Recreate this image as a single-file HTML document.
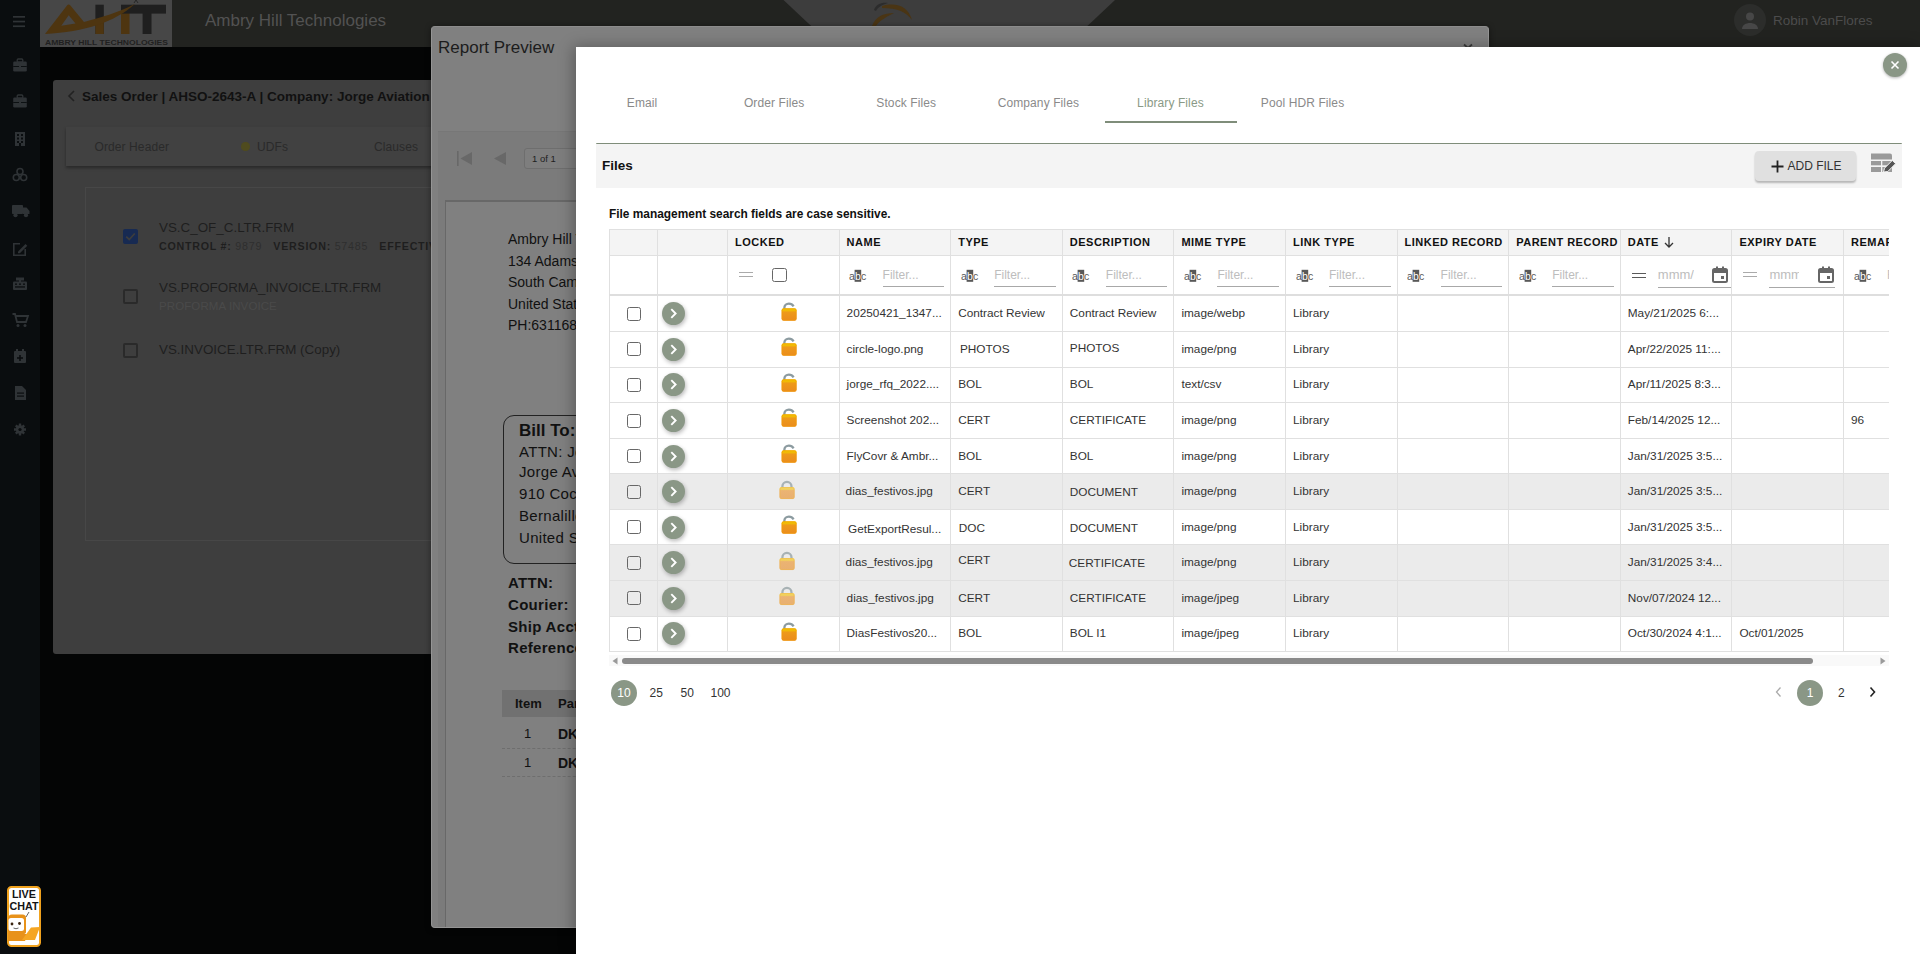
<!DOCTYPE html><html><head><meta charset="utf-8"><style>
*{box-sizing:border-box;margin:0;padding:0}
html,body{width:1920px;height:954px;overflow:hidden;background:#040505;font-family:"Liberation Sans",sans-serif}
.a{position:absolute}
.t{position:absolute;white-space:nowrap;line-height:1}
.vl{position:absolute;width:1px;background:#e0e0e0}
.hl{position:absolute;height:1px;background:#e0e0e0}
.cb{position:absolute;width:14.5px;height:14.2px;border:1.7px solid #676767;border-radius:2.5px}
.ex{position:absolute;width:23px;height:23px;border-radius:50%;background:#8a9786;box-shadow:1px 2px 4px rgba(0,0,0,.28)}
.dt{position:absolute;white-space:nowrap;font-size:11.8px;color:#333;line-height:1}
.hd{position:absolute;white-space:nowrap;font-size:11px;font-weight:bold;letter-spacing:.5px;color:#111;line-height:1}
.ph{position:absolute;white-space:nowrap;font-size:12px;color:#bdbdbd;line-height:1}
.ul{position:absolute;height:1px;background:#a8a8a8}
</style></head><body>
<div class="a" style="left:0;top:0;width:40px;height:954px;background:#0a0d0f"></div>
<svg class="a" style="left:0;top:0" width="40" height="440" viewBox="0 0 40 440"><g fill="#2f3336"><rect x="13" y="16" width="12" height="1.7"/><rect x="13" y="20.7" width="12" height="1.7"/><rect x="13" y="25.4" width="12" height="1.7"/><rect x="13.2" y="61.5" width="13.6" height="10" rx="1.2"/><rect x="17.2" y="59" width="5.6" height="3.2" rx="1" fill="none" stroke="#2f3336" stroke-width="1.3"/><rect x="13.2" y="66" width="13.6" height="0.9" fill="#0a0d0f"/><rect x="19" y="65.3" width="2" height="2.2"/><rect x="13.2" y="97.5" width="13.6" height="10" rx="1.2"/><rect x="17.2" y="95" width="5.6" height="3.2" rx="1" fill="none" stroke="#2f3336" stroke-width="1.3"/><rect x="13.2" y="102" width="13.6" height="0.9" fill="#0a0d0f"/><rect x="19" y="101.3" width="2" height="2.2"/><rect x="15" y="132" width="10" height="14"/><g fill="#0a0d0f"><rect x="17" y="134" width="2" height="2"/><rect x="21" y="134" width="2" height="2"/><rect x="17" y="137.5" width="2" height="2"/><rect x="21" y="137.5" width="2" height="2"/><rect x="17" y="141" width="2" height="2"/><rect x="21" y="141" width="2" height="2"/><rect x="19" y="143" width="2" height="3"/></g><g fill="none" stroke="#2f3336" stroke-width="1.6"><circle cx="20" cy="171.5" r="3"/><circle cx="16.3" cy="177.5" r="3"/><circle cx="23.7" cy="177.5" r="3"/></g><rect x="12" y="205" width="11" height="9" rx="0.8"/><path d="M23 207.5h3.5l3 3.5v3h-6.5z"/><circle cx="15.5" cy="215.2" r="2.1"/><circle cx="26" cy="215.2" r="2.1"/><path d="M13 243h7v1.6h-5.4v9.8h9.8v-5.4h1.6v7h-13z"/><path d="M18 251.5l7.5-7.5 1.8 1.8-7.5 7.5h-1.8z"/><rect x="13" y="281.5" width="14" height="8.5" rx="1"/><rect x="16" y="277.5" width="8" height="3"/><rect x="19" y="280" width="2" height="2"/><g fill="#0a0d0f"><rect x="15" y="283.5" width="2" height="1.3"/><rect x="19" y="283.5" width="2" height="1.3"/><rect x="23" y="283.5" width="2" height="1.3"/><rect x="15" y="286.3" width="10" height="1.3"/></g><path d="M12.5 314h2.5l2 8h9l2-6h-12" fill="none" stroke="#2f3336" stroke-width="1.8"/><circle cx="18" cy="325.5" r="1.5"/><circle cx="25" cy="325.5" r="1.5"/><rect x="14" y="351" width="12" height="12" rx="1"/><rect x="16" y="349" width="2" height="3"/><rect x="22" y="349" width="2" height="3"/><g fill="#0a0d0f"><rect x="19.2" y="355" width="1.6" height="6"/><rect x="17" y="357.2" width="6" height="1.6"/></g><path d="M15 386h7l4 4v10h-11z"/><g fill="#0a0d0f"><rect x="17" y="392.5" width="7" height="1.2"/><rect x="17" y="395.5" width="7" height="1.2"/></g><circle cx="20" cy="429.5" r="4.2"/><g stroke="#2f3336" stroke-width="2.4"><path d="M20 423.5v12M14 429.5h12M15.8 425.3l8.4 8.4M24.2 425.3l-8.4 8.4"/></g><circle cx="20" cy="429.5" r="1.6" fill="#0a0d0f"/></g></svg>
<div class="a" style="left:40px;top:0;width:1880px;height:47px;background:#222320"></div>
<svg class="a" style="left:770px;top:0" width="360" height="47" viewBox="0 0 360 47"><path d="M13.5 0 L 63.5 47 L 295 47 L 345 0 Z" fill="#3d3d3d"/><path d="M102 26 C 106 16, 114 13, 124 13 C 118 16, 110 20, 106 26 Z" fill="#4a3514"/><path d="M112 6 C 126 2, 138 6, 142 20 C 136 12, 128 8, 112 8 Z" fill="#4a3514"/><path d="M104 10 C 106 4, 112 2, 118 3 C 112 5, 108 7, 106 11 Z" fill="#2c2c2c"/></svg>
<div class="a" style="left:40px;top:0;width:132px;height:47px;background:#474747"></div>
<svg class="a" style="left:40px;top:0" width="132" height="47" viewBox="0 0 132 47"><rect x="55.4" y="4.7" width="8.4" height="29.3" fill="#1f1f1f"/><rect x="55.4" y="22" width="8.4" height="12" fill="#4e3510"/><rect x="81" y="12" width="8.5" height="22" fill="#4e3510"/><rect x="81" y="4.7" width="45" height="8.9" fill="#1f1f1f"/><rect x="102.6" y="13" width="8.9" height="21" fill="#1f1f1f"/><path d="M5 34 L27 5.5 Q28.7 3.6 30.4 5.5 L44 22 C60 18, 80 12, 95.2 3.8 C75 22, 45 32, 5 34 Z" fill="#4e3510"/><path d="M21.3 25.7 L28.7 15.2 L35.5 23.6 Z" fill="#474747"/><path d="M94 3 L96 0 L98 3" stroke="#1f1f1f" stroke-width="0.8" fill="none"/><text x="5" y="44.5" font-family="Liberation Sans" font-weight="bold" font-size="7.6" fill="#1f1f1f" textLength="123" lengthAdjust="spacingAndGlyphs">AMBRY HILL TECHNOLOGIES</text></svg>
<div class="t" style="left:205px;top:12px;font-size:17px;color:#525252">Ambry Hill Technologies</div>
<div class="a" style="left:1734px;top:4px;width:32px;height:32px;border-radius:50%;background:#2c2d2b"></div>
<svg class="a" style="left:1734px;top:4px" width="32" height="32"><circle cx="16" cy="12.5" r="4" fill="#474747"/><path d="M8 25c0-4 4-6 8-6s8 2 8 6z" fill="#474747"/></svg>
<div class="t" style="left:1773px;top:14px;font-size:13.5px;color:#4c4c4c">Robin VanFlores</div>
<div class="a" style="left:53px;top:80px;width:400px;height:574px;background:#3e3e3e;border-radius:3px"></div>
<svg class="a" style="left:64px;top:89px" width="14" height="14"><path d="M10 2L5 7L10 12" stroke="#222" stroke-width="1.6" fill="none"/></svg>
<div class="t" style="left:82px;top:90px;font-size:13.5px;font-weight:bold;color:#111">Sales Order | AHSO-2643-A | Company: Jorge Aviation</div>
<div class="a" style="left:66px;top:127px;width:400px;height:39px;background:#414141;box-shadow:0 2px 3px rgba(0,0,0,.35)"></div>
<div class="t" style="left:94.5px;top:141px;font-size:12px;letter-spacing:.1px;color:#2a2a2a">Order Header</div>
<div class="a" style="left:241px;top:142px;width:8.5px;height:8.5px;border-radius:50%;background:#4f4b1e"></div>
<div class="t" style="left:257px;top:141px;font-size:12px;letter-spacing:.1px;color:#2a2a2a">UDFs</div>
<div class="t" style="left:374px;top:141px;font-size:12px;letter-spacing:.1px;color:#2a2a2a">Clauses</div>
<div class="a" style="left:85px;top:187px;width:400px;height:354px;border:1px solid #474747"></div>
<div class="a" style="left:123px;top:229px;width:15px;height:15px;background:#172a52;border-radius:2px"></div>
<svg class="a" style="left:123px;top:229px" width="15" height="15"><path d="M3.2 7.6L6.2 10.5L11.8 4.5" stroke="#3d3d3d" stroke-width="1.8" fill="none"/></svg>
<div class="t" style="left:159px;top:221px;font-size:13.4px;color:#1e1e1e">VS.C_OF_C.LTR.FRM</div>
<div class="t" style="left:159px;top:241px;font-size:10.7px;font-weight:bold;letter-spacing:.75px;color:#1e1e1e">CONTROL #: <span style="font-weight:normal;color:#2e2e2e">9879</span>&nbsp;&nbsp; VERSION: <span style="font-weight:normal;color:#2e2e2e">57485</span>&nbsp;&nbsp; EFFECTIVE</div>
<div class="a" style="left:123px;top:288.5px;width:15px;height:15px;border:2px solid #2a2a2a;border-radius:2px"></div>
<div class="t" style="left:159px;top:281px;font-size:13.4px;color:#1e1e1e">VS.PROFORMA_INVOICE.LTR.FRM</div>
<div class="t" style="left:159px;top:300.5px;font-size:11.5px;letter-spacing:.1px;color:#4a4a4a">PROFORMA INVOICE</div>
<div class="a" style="left:123px;top:342.5px;width:15px;height:15px;border:2px solid #2a2a2a;border-radius:2px"></div>
<div class="t" style="left:159px;top:343px;font-size:13.4px;color:#1e1e1e">VS.INVOICE.LTR.FRM (Copy)</div>
<svg class="a" style="left:7px;top:886px" width="34" height="61" viewBox="0 0 34 61"><rect x="1" y="1" width="32" height="59" rx="3.5" fill="#fff" stroke="#f0a21e" stroke-width="2"/><text x="17" y="12" text-anchor="middle" font-family="Liberation Sans" font-weight="bold" font-size="10" fill="#151515" textLength="24" lengthAdjust="spacingAndGlyphs">LIVE</text><text x="17" y="23.5" text-anchor="middle" font-family="Liberation Sans" font-weight="bold" font-size="10" fill="#151515" textLength="29" lengthAdjust="spacingAndGlyphs">CHAT</text><path d="M1 33 Q1 28.5 5 28.5 L15.5 28.5 Q19 28.5 19 32 L19 46 Q19 48 16 48 L1 48 Z" fill="#e8921a"/><rect x="1.5" y="32" width="15.5" height="13" rx="2.5" fill="#fff"/><circle cx="5" cy="38" r="1.4" fill="#3a2410"/><circle cx="12.5" cy="37.5" r="1.4" fill="#3a2410"/><path d="M6.5 42 Q9 43.5 11.5 42" stroke="#555" stroke-width="0.9" fill="none"/><path d="M1 48 L21 48 L18 55 L1 55 Z" fill="#e8921a"/><path d="M15 54 L24 41.5 L33 41 L28 54 Z" fill="#f5a623"/><path d="M19 31 L22 26" stroke="#666" stroke-width="1"/></svg>
<div class="a" style="left:431px;top:26px;width:1058px;height:902px;background:#808080;border-radius:4px;border:1px solid #959595;border-top:1.5px solid #8c8c8c;box-shadow:0 1px 6px rgba(0,0,0,.45)"></div>
<div class="t" style="left:438px;top:39px;font-size:17px;color:#1c1c1c">Report Preview</div>
<svg class="a" style="left:1462px;top:41px" width="12" height="7"><path d="M2 3.5L6 7L10 3.5" stroke="#3a3a3a" stroke-width="1.8" fill="none"/></svg>
<div class="a" style="left:438px;top:131px;width:200px;height:796px;background:#7b7b7b;border-top:1px solid #777"></div>
<svg class="a" style="left:455px;top:149px" width="55" height="19" viewBox="0 0 55 19"><rect x="2" y="2" width="1.6" height="15" fill="#686868"/><path d="M5.5 9.5L17 3V16Z" fill="#686868"/><path d="M39 9.5L51 3V16Z" fill="#686868"/></svg>
<div class="a" style="left:523.5px;top:147.5px;width:80px;height:21px;border:1px solid #6e6e6e;border-radius:3px;background:#7e7e7e"></div>
<div class="t" style="left:532px;top:153.5px;font-size:9.5px;color:#1e1e1e">1 of 1</div>
<div class="a" style="left:444.5px;top:200px;width:200px;height:727px;background:#808080;border-left:1.5px solid #686868;border-top:2px solid #686868"></div>
<div class="t" style="left:508px;top:232.0px;font-size:14px;color:#111">Ambry Hill Technologies</div>
<div class="t" style="left:508px;top:253.6px;font-size:14px;color:#111">134 Adams Street</div>
<div class="t" style="left:508px;top:275.2px;font-size:14px;color:#111">South Cambridge</div>
<div class="t" style="left:508px;top:296.8px;font-size:14px;color:#111">United States</div>
<div class="t" style="left:508px;top:318.4px;font-size:14px;color:#111">PH:6311688</div>
<div class="a" style="left:502.5px;top:415px;width:200px;height:149px;border:1.5px solid #222;border-radius:11px"></div>
<div class="t" style="left:519px;top:422px;font-size:17px;font-weight:bold;color:#111">Bill To:</div>
<div class="t" style="left:519px;top:444px;font-size:15px;letter-spacing:.3px;color:#111">ATTN: Jorge</div>
<div class="t" style="left:519px;top:463.5px;font-size:15px;letter-spacing:.3px;color:#111">Jorge Aviation</div>
<div class="t" style="left:519px;top:485.5px;font-size:15px;letter-spacing:.3px;color:#111">910 Cocoa</div>
<div class="t" style="left:519px;top:507.5px;font-size:15px;letter-spacing:.3px;color:#111">Bernalillo</div>
<div class="t" style="left:519px;top:530px;font-size:15px;letter-spacing:.3px;color:#111">United States</div>
<div class="t" style="left:508px;top:575.0px;font-size:15px;letter-spacing:.3px;font-weight:bold;color:#111">ATTN:</div>
<div class="t" style="left:508px;top:596.8px;font-size:15px;letter-spacing:.3px;font-weight:bold;color:#111">Courier:</div>
<div class="t" style="left:508px;top:618.6px;font-size:15px;letter-spacing:.3px;font-weight:bold;color:#111">Ship Acct</div>
<div class="t" style="left:508px;top:640.4px;font-size:15px;letter-spacing:.3px;font-weight:bold;color:#111">Reference</div>
<div class="a" style="left:502px;top:690px;width:200px;height:27px;background:#717171"></div>
<div class="t" style="left:515px;top:697px;font-size:13px;font-weight:bold;color:#111">Item</div>
<div class="t" style="left:558px;top:697px;font-size:13px;font-weight:bold;color:#111">Part</div>
<div class="t" style="left:524px;top:727.0px;font-size:13px;color:#111">1</div>
<div class="t" style="left:558px;top:727.0px;font-size:14px;font-weight:bold;color:#111">DK</div>
<div class="a" style="left:502px;top:747.5px;width:200px;height:0;border-top:1px dashed #6e6e6e"></div>
<div class="t" style="left:524px;top:755.5px;font-size:13px;color:#111">1</div>
<div class="t" style="left:558px;top:755.5px;font-size:14px;font-weight:bold;color:#111">DK</div>
<div class="a" style="left:502px;top:776.0px;width:200px;height:0;border-top:1px dashed #6e6e6e"></div>
<div class="a" style="left:576px;top:47px;width:1344px;height:907px;background:#fff;box-shadow:-3px -1px 14px rgba(0,0,0,.28)"></div>
<div class="a" style="left:1883px;top:53px;width:24px;height:24px;border-radius:50%;background:#8a9786;box-shadow:0 1px 3px rgba(0,0,0,.3)"></div>
<svg class="a" style="left:1883px;top:53px" width="24" height="24"><path d="M8.5 8.5L15.5 15.5M15.5 8.5L8.5 15.5" stroke="#fff" stroke-width="1.6"/></svg>
<div class="t" style="left:576.0px;top:97px;width:132.1px;text-align:center;font-size:12px;letter-spacing:.1px;color:#8a8a8a">Email</div>
<div class="t" style="left:708.1px;top:97px;width:132.1px;text-align:center;font-size:12px;letter-spacing:.1px;color:#8a8a8a">Order Files</div>
<div class="t" style="left:840.2px;top:97px;width:132.1px;text-align:center;font-size:12px;letter-spacing:.1px;color:#8a8a8a">Stock Files</div>
<div class="t" style="left:972.3px;top:97px;width:132.1px;text-align:center;font-size:12px;letter-spacing:.1px;color:#8a8a8a">Company Files</div>
<div class="t" style="left:1104.4px;top:97px;width:132.1px;text-align:center;font-size:12px;letter-spacing:.1px;color:#8a9a86">Library Files</div>
<div class="t" style="left:1236.5px;top:97px;width:132.1px;text-align:center;font-size:12px;letter-spacing:.1px;color:#8a8a8a">Pool HDR Files</div>
<div class="a" style="left:1104.7px;top:121.4px;width:132.1px;height:1.5px;background:#7f8d7a"></div>
<div class="a" style="left:596px;top:142.7px;width:1306px;height:1.6px;background:#7f8d7a;border-radius:2px 2px 0 0"></div>
<div class="a" style="left:596px;top:144px;width:1306px;height:44px;background:#f4f4f4"></div>
<div class="t" style="left:602px;top:159px;font-size:13.5px;font-weight:bold;color:#111">Files</div>
<div class="a" style="left:1755px;top:151px;width:101px;height:30px;background:#e0e0e0;border-radius:4px;box-shadow:0 2px 2px rgba(0,0,0,.25)"></div>
<svg class="a" style="left:1771px;top:160px" width="13" height="13"><path d="M6.5 0.5V12.5M0.5 6.5H12.5" stroke="#222" stroke-width="1.8"/></svg>
<div class="t" style="left:1787.5px;top:160px;font-size:12px;color:#333">ADD FILE</div>
<svg class="a" style="left:1871px;top:153px" width="26" height="21" viewBox="0 0 26 21"><path d="M0 0.5H19Q21 0.5 21 2.5V6.5H0Z" fill="#9a9a9a"/><rect x="0" y="8" width="10" height="4.3" fill="#9a9a9a"/><rect x="11.3" y="8" width="9.7" height="4.3" fill="#9a9a9a"/><rect x="0" y="14" width="10" height="5" fill="#9a9a9a"/><rect x="11.3" y="14" width="9.7" height="5" fill="#9a9a9a"/><path d="M12.5 19L13.5 15.2L21.3 7.4L24.6 10.7L16.8 18.5Z" fill="#555" stroke="#f4f4f4" stroke-width="1"/></svg>
<div class="t" style="left:609px;top:208.5px;font-size:11.9px;font-weight:bold;color:#111">File management search fields are case sensitive.</div>
<div class="a" style="left:609px;top:229px;width:1280px;height:26px;background:#f4f4f4"></div>
<div class="a" style="left:609px;top:473.80px;width:1280px;height:35.56px;background:#ebebeb"></div>
<div class="a" style="left:609px;top:544.92px;width:1280px;height:35.56px;background:#ebebeb"></div>
<div class="a" style="left:609px;top:580.48px;width:1280px;height:35.56px;background:#ebebeb"></div>
<div class="vl" style="left:609px;top:229px;height:423px"></div>
<div class="vl" style="left:657px;top:229px;height:423px"></div>
<div class="vl" style="left:727px;top:229px;height:423px"></div>
<div class="vl" style="left:839px;top:229px;height:423px"></div>
<div class="vl" style="left:950px;top:229px;height:423px"></div>
<div class="vl" style="left:1062px;top:229px;height:423px"></div>
<div class="vl" style="left:1173px;top:229px;height:423px"></div>
<div class="vl" style="left:1285px;top:229px;height:423px"></div>
<div class="vl" style="left:1397px;top:229px;height:423px"></div>
<div class="vl" style="left:1508px;top:229px;height:423px"></div>
<div class="vl" style="left:1620px;top:229px;height:423px"></div>
<div class="vl" style="left:1731px;top:229px;height:423px"></div>
<div class="vl" style="left:1843px;top:229px;height:423px"></div>
<div class="hl" style="left:609px;top:229px;width:1280px"></div>
<div class="hl" style="left:609px;top:255px;width:1280px"></div>
<div class="a" style="left:609px;top:294px;width:1280px;height:2px;background:#dedede"></div>
<div class="hl" style="left:609px;top:331px;width:1280px"></div>
<div class="hl" style="left:609px;top:367px;width:1280px"></div>
<div class="hl" style="left:609px;top:402px;width:1280px"></div>
<div class="hl" style="left:609px;top:438px;width:1280px"></div>
<div class="hl" style="left:609px;top:473px;width:1280px"></div>
<div class="hl" style="left:609px;top:509px;width:1280px"></div>
<div class="hl" style="left:609px;top:544px;width:1280px"></div>
<div class="hl" style="left:609px;top:580px;width:1280px"></div>
<div class="hl" style="left:609px;top:616px;width:1280px"></div>
<div class="hl" style="left:609px;top:651px;width:1280px"></div>
<div class="hd" style="left:735.0px;top:237px">LOCKED</div>
<div class="hd" style="left:846.6px;top:237px">NAME</div>
<div class="hd" style="left:958.2px;top:237px">TYPE</div>
<div class="hd" style="left:1069.8px;top:237px">DESCRIPTION</div>
<div class="hd" style="left:1181.4px;top:237px">MIME TYPE</div>
<div class="hd" style="left:1293.0px;top:237px">LINK TYPE</div>
<div class="hd" style="left:1404.6px;top:237px">LINKED RECORD</div>
<div class="hd" style="left:1516.2px;top:237px">PARENT RECORD</div>
<div class="hd" style="left:1627.8px;top:237px">DATE</div>
<div class="hd" style="left:1739.4px;top:237px">EXPIRY DATE</div>
<div class="hd" style="left:1851.0px;top:237px">REMARKS</div>
<svg class="a" style="left:1663px;top:236px" width="12" height="12"><path d="M6 1V11M2 7L6 11L10 7" stroke="#333" stroke-width="1.3" fill="none"/></svg>
<div class="a" style="left:739px;top:272px;width:14px;height:1.2px;background:#aaa"></div><div class="a" style="left:739px;top:276px;width:14px;height:1.2px;background:#aaa"></div>
<div class="cb" style="left:772px;top:268px;width:15px;height:14px"></div>
<svg class="a" style="left:849px;top:268px" width="20" height="16" viewBox="0 0 20 16"><text x="0" y="12.2" font-family="Liberation Sans" font-size="10.5" fill="#585858">a</text><rect x="5.6" y="1.8" width="6.6" height="12" fill="#585858"/><text x="5.9" y="12.2" font-family="Liberation Sans" font-size="10.5" fill="#fff">b</text><text x="12" y="12.2" font-family="Liberation Sans" font-size="10.5" fill="#585858">c</text></svg>
<div class="ph" style="left:882.6px;top:269px">Filter...</div>
<div class="ul" style="left:882.6px;top:286px;width:61.6px"></div>
<svg class="a" style="left:961px;top:268px" width="20" height="16" viewBox="0 0 20 16"><text x="0" y="12.2" font-family="Liberation Sans" font-size="10.5" fill="#585858">a</text><rect x="5.6" y="1.8" width="6.6" height="12" fill="#585858"/><text x="5.9" y="12.2" font-family="Liberation Sans" font-size="10.5" fill="#fff">b</text><text x="12" y="12.2" font-family="Liberation Sans" font-size="10.5" fill="#585858">c</text></svg>
<div class="ph" style="left:994.2px;top:269px">Filter...</div>
<div class="ul" style="left:994.2px;top:286px;width:61.6px"></div>
<svg class="a" style="left:1072px;top:268px" width="20" height="16" viewBox="0 0 20 16"><text x="0" y="12.2" font-family="Liberation Sans" font-size="10.5" fill="#585858">a</text><rect x="5.6" y="1.8" width="6.6" height="12" fill="#585858"/><text x="5.9" y="12.2" font-family="Liberation Sans" font-size="10.5" fill="#fff">b</text><text x="12" y="12.2" font-family="Liberation Sans" font-size="10.5" fill="#585858">c</text></svg>
<div class="ph" style="left:1105.8px;top:269px">Filter...</div>
<div class="ul" style="left:1105.8px;top:286px;width:61.6px"></div>
<svg class="a" style="left:1184px;top:268px" width="20" height="16" viewBox="0 0 20 16"><text x="0" y="12.2" font-family="Liberation Sans" font-size="10.5" fill="#585858">a</text><rect x="5.6" y="1.8" width="6.6" height="12" fill="#585858"/><text x="5.9" y="12.2" font-family="Liberation Sans" font-size="10.5" fill="#fff">b</text><text x="12" y="12.2" font-family="Liberation Sans" font-size="10.5" fill="#585858">c</text></svg>
<div class="ph" style="left:1217.4px;top:269px">Filter...</div>
<div class="ul" style="left:1217.4px;top:286px;width:61.6px"></div>
<svg class="a" style="left:1296px;top:268px" width="20" height="16" viewBox="0 0 20 16"><text x="0" y="12.2" font-family="Liberation Sans" font-size="10.5" fill="#585858">a</text><rect x="5.6" y="1.8" width="6.6" height="12" fill="#585858"/><text x="5.9" y="12.2" font-family="Liberation Sans" font-size="10.5" fill="#fff">b</text><text x="12" y="12.2" font-family="Liberation Sans" font-size="10.5" fill="#585858">c</text></svg>
<div class="ph" style="left:1329.0px;top:269px">Filter...</div>
<div class="ul" style="left:1329.0px;top:286px;width:61.6px"></div>
<svg class="a" style="left:1407px;top:268px" width="20" height="16" viewBox="0 0 20 16"><text x="0" y="12.2" font-family="Liberation Sans" font-size="10.5" fill="#585858">a</text><rect x="5.6" y="1.8" width="6.6" height="12" fill="#585858"/><text x="5.9" y="12.2" font-family="Liberation Sans" font-size="10.5" fill="#fff">b</text><text x="12" y="12.2" font-family="Liberation Sans" font-size="10.5" fill="#585858">c</text></svg>
<div class="ph" style="left:1440.6px;top:269px">Filter...</div>
<div class="ul" style="left:1440.6px;top:286px;width:61.6px"></div>
<svg class="a" style="left:1519px;top:268px" width="20" height="16" viewBox="0 0 20 16"><text x="0" y="12.2" font-family="Liberation Sans" font-size="10.5" fill="#585858">a</text><rect x="5.6" y="1.8" width="6.6" height="12" fill="#585858"/><text x="5.9" y="12.2" font-family="Liberation Sans" font-size="10.5" fill="#fff">b</text><text x="12" y="12.2" font-family="Liberation Sans" font-size="10.5" fill="#585858">c</text></svg>
<div class="ph" style="left:1552.2px;top:269px">Filter...</div>
<div class="ul" style="left:1552.2px;top:286px;width:61.6px"></div>
<div class="a" style="left:1631.8px;top:272.5px;width:14px;height:1.3px;background:#5a5a5a"></div><div class="a" style="left:1631.8px;top:276.5px;width:14px;height:1.3px;background:#5a5a5a"></div>
<div class="ph" style="left:1657.8px;top:268px;font-size:13px;width:36px;overflow:hidden">mmm/dd/yyyy</div>
<svg class="a" style="left:1712px;top:266px" width="16" height="17" viewBox="0 0 16 17"><rect x="1" y="3" width="14" height="13" rx="1.5" fill="none" stroke="#666" stroke-width="2"/><rect x="1" y="3" width="14" height="4" fill="#666"/><rect x="4" y="0.5" width="2" height="3" fill="#666"/><rect x="10" y="0.5" width="2" height="3" fill="#666"/><rect x="9" y="10" width="3" height="3" fill="#666"/></svg>
<div class="ul" style="left:1657.8px;top:287px;width:73.6px"></div>
<div class="a" style="left:1743.4px;top:272px;width:14px;height:1.2px;background:#aaa"></div><div class="a" style="left:1743.4px;top:276px;width:14px;height:1.2px;background:#aaa"></div>
<div class="ph" style="left:1769.4px;top:268px;font-size:13px;width:30px;overflow:hidden">mmm/dd/yyyy</div>
<svg class="a" style="left:1818px;top:266px" width="16" height="17" viewBox="0 0 16 17"><rect x="1" y="3" width="14" height="13" rx="1.5" fill="none" stroke="#666" stroke-width="2"/><rect x="1" y="3" width="14" height="4" fill="#666"/><rect x="4" y="0.5" width="2" height="3" fill="#666"/><rect x="10" y="0.5" width="2" height="3" fill="#666"/><rect x="9" y="10" width="3" height="3" fill="#666"/></svg>
<div class="ul" style="left:1769.4px;top:287px;width:66px"></div>
<svg class="a" style="left:1854px;top:268px" width="20" height="16" viewBox="0 0 20 16"><text x="0" y="12.2" font-family="Liberation Sans" font-size="10.5" fill="#585858">a</text><rect x="5.6" y="1.8" width="6.6" height="12" fill="#585858"/><text x="5.9" y="12.2" font-family="Liberation Sans" font-size="10.5" fill="#fff">b</text><text x="12" y="12.2" font-family="Liberation Sans" font-size="10.5" fill="#585858">c</text></svg>
<div class="ph" style="left:1887.0px;top:269px;width:2px;overflow:hidden">Filter...</div>
<div class="cb" style="left:626.5px;top:306.8px"></div>
<div class="ex" style="left:661.5px;top:302.3px"></div>
<svg class="a" style="left:661.5px;top:302.3px" width="23" height="23"><path d="M9.3 7.2L13.6 11.5L9.3 15.8" stroke="#fff" stroke-width="1.9" fill="none"/></svg>
<svg class="a" style="left:776px;top:299.78px" width="24" height="24" viewBox="0 0 24 24"><defs><linearGradient id="lg" x1="0" y1="0" x2="0" y2="1"><stop offset="0" stop-color="#f2c400"/><stop offset=".22" stop-color="#f0b808"/><stop offset=".3" stop-color="#ee9a1a"/><stop offset="1" stop-color="#ea8c1e"/></linearGradient></defs><path d="M8.3 10.5V8.2C8.3 5.3 10.4 3.6 12.9 3.6C14.9 3.6 16.5 4.5 17.6 6.3" fill="none" stroke="#8c9ba0" stroke-width="2.3"/><rect x="5.6" y="8.2" width="15" height="12.5" rx="2" fill="url(#lg)"/><rect x="6.1" y="8.7" width="14" height="11.5" rx="1.6" fill="none" stroke="#f39c00" stroke-width="1" opacity=".6"/></svg>
<div class="dt" style="left:846.6px;top:308.3px">20250421_1347...</div>
<div class="dt" style="left:958.2px;top:308.3px">Contract Review</div>
<div class="dt" style="left:1069.8px;top:308.3px">Contract Review</div>
<div class="dt" style="left:1181.4px;top:308.3px">image/webp</div>
<div class="dt" style="left:1293.0px;top:308.3px">Library</div>
<div class="dt" style="left:1627.8px;top:308.3px">May/21/2025 6:...</div>
<div class="cb" style="left:626.5px;top:342.3px"></div>
<div class="ex" style="left:661.5px;top:337.8px"></div>
<svg class="a" style="left:661.5px;top:337.8px" width="23" height="23"><path d="M9.3 7.2L13.6 11.5L9.3 15.8" stroke="#fff" stroke-width="1.9" fill="none"/></svg>
<svg class="a" style="left:776px;top:335.34px" width="24" height="24" viewBox="0 0 24 24"><defs><linearGradient id="lg" x1="0" y1="0" x2="0" y2="1"><stop offset="0" stop-color="#f2c400"/><stop offset=".22" stop-color="#f0b808"/><stop offset=".3" stop-color="#ee9a1a"/><stop offset="1" stop-color="#ea8c1e"/></linearGradient></defs><path d="M8.3 10.5V8.2C8.3 5.3 10.4 3.6 12.9 3.6C14.9 3.6 16.5 4.5 17.6 6.3" fill="none" stroke="#8c9ba0" stroke-width="2.3"/><rect x="5.6" y="8.2" width="15" height="12.5" rx="2" fill="url(#lg)"/><rect x="6.1" y="8.7" width="14" height="11.5" rx="1.6" fill="none" stroke="#f39c00" stroke-width="1" opacity=".6"/></svg>
<div class="dt" style="left:846.6px;top:343.8px">circle-logo.png</div>
<div class="dt" style="left:956.7px;top:343.8px">&nbsp;PHOTOS</div>
<div class="dt" style="left:1069.8px;top:343.0px">PHOTOS</div>
<div class="dt" style="left:1181.4px;top:343.8px">image/png</div>
<div class="dt" style="left:1293.0px;top:343.8px">Library</div>
<div class="dt" style="left:1627.8px;top:343.8px">Apr/22/2025 11:...</div>
<div class="cb" style="left:626.5px;top:377.9px"></div>
<div class="ex" style="left:661.5px;top:373.4px"></div>
<svg class="a" style="left:661.5px;top:373.4px" width="23" height="23"><path d="M9.3 7.2L13.6 11.5L9.3 15.8" stroke="#fff" stroke-width="1.9" fill="none"/></svg>
<svg class="a" style="left:776px;top:370.90px" width="24" height="24" viewBox="0 0 24 24"><defs><linearGradient id="lg" x1="0" y1="0" x2="0" y2="1"><stop offset="0" stop-color="#f2c400"/><stop offset=".22" stop-color="#f0b808"/><stop offset=".3" stop-color="#ee9a1a"/><stop offset="1" stop-color="#ea8c1e"/></linearGradient></defs><path d="M8.3 10.5V8.2C8.3 5.3 10.4 3.6 12.9 3.6C14.9 3.6 16.5 4.5 17.6 6.3" fill="none" stroke="#8c9ba0" stroke-width="2.3"/><rect x="5.6" y="8.2" width="15" height="12.5" rx="2" fill="url(#lg)"/><rect x="6.1" y="8.7" width="14" height="11.5" rx="1.6" fill="none" stroke="#f39c00" stroke-width="1" opacity=".6"/></svg>
<div class="dt" style="left:846.6px;top:379.4px">jorge_rfq_2022....</div>
<div class="dt" style="left:958.2px;top:379.4px">BOL</div>
<div class="dt" style="left:1069.8px;top:379.4px">BOL</div>
<div class="dt" style="left:1181.4px;top:379.4px">text/csv</div>
<div class="dt" style="left:1293.0px;top:379.4px">Library</div>
<div class="dt" style="left:1627.8px;top:379.4px">Apr/11/2025 8:3...</div>
<div class="cb" style="left:626.5px;top:413.5px"></div>
<div class="ex" style="left:661.5px;top:409.0px"></div>
<svg class="a" style="left:661.5px;top:409.0px" width="23" height="23"><path d="M9.3 7.2L13.6 11.5L9.3 15.8" stroke="#fff" stroke-width="1.9" fill="none"/></svg>
<svg class="a" style="left:776px;top:406.46px" width="24" height="24" viewBox="0 0 24 24"><defs><linearGradient id="lg" x1="0" y1="0" x2="0" y2="1"><stop offset="0" stop-color="#f2c400"/><stop offset=".22" stop-color="#f0b808"/><stop offset=".3" stop-color="#ee9a1a"/><stop offset="1" stop-color="#ea8c1e"/></linearGradient></defs><path d="M8.3 10.5V8.2C8.3 5.3 10.4 3.6 12.9 3.6C14.9 3.6 16.5 4.5 17.6 6.3" fill="none" stroke="#8c9ba0" stroke-width="2.3"/><rect x="5.6" y="8.2" width="15" height="12.5" rx="2" fill="url(#lg)"/><rect x="6.1" y="8.7" width="14" height="11.5" rx="1.6" fill="none" stroke="#f39c00" stroke-width="1" opacity=".6"/></svg>
<div class="dt" style="left:846.6px;top:415.0px">Screenshot 202...</div>
<div class="dt" style="left:958.2px;top:415.0px">CERT</div>
<div class="dt" style="left:1069.8px;top:415.0px">CERTIFICATE</div>
<div class="dt" style="left:1181.4px;top:415.0px">image/png</div>
<div class="dt" style="left:1293.0px;top:415.0px">Library</div>
<div class="dt" style="left:1627.8px;top:415.0px">Feb/14/2025 12...</div>
<div class="dt" style="left:1851.0px;top:415.0px">96</div>
<div class="cb" style="left:626.5px;top:449.0px"></div>
<div class="ex" style="left:661.5px;top:444.5px"></div>
<svg class="a" style="left:661.5px;top:444.5px" width="23" height="23"><path d="M9.3 7.2L13.6 11.5L9.3 15.8" stroke="#fff" stroke-width="1.9" fill="none"/></svg>
<svg class="a" style="left:776px;top:442.02px" width="24" height="24" viewBox="0 0 24 24"><defs><linearGradient id="lg" x1="0" y1="0" x2="0" y2="1"><stop offset="0" stop-color="#f2c400"/><stop offset=".22" stop-color="#f0b808"/><stop offset=".3" stop-color="#ee9a1a"/><stop offset="1" stop-color="#ea8c1e"/></linearGradient></defs><path d="M8.3 10.5V8.2C8.3 5.3 10.4 3.6 12.9 3.6C14.9 3.6 16.5 4.5 17.6 6.3" fill="none" stroke="#8c9ba0" stroke-width="2.3"/><rect x="5.6" y="8.2" width="15" height="12.5" rx="2" fill="url(#lg)"/><rect x="6.1" y="8.7" width="14" height="11.5" rx="1.6" fill="none" stroke="#f39c00" stroke-width="1" opacity=".6"/></svg>
<div class="dt" style="left:846.6px;top:450.5px">FlyCovr &amp; Ambr...</div>
<div class="dt" style="left:958.2px;top:450.5px">BOL</div>
<div class="dt" style="left:1069.8px;top:450.5px">BOL</div>
<div class="dt" style="left:1181.4px;top:450.5px">image/png</div>
<div class="dt" style="left:1293.0px;top:450.5px">Library</div>
<div class="dt" style="left:1627.8px;top:450.5px">Jan/31/2025 3:5...</div>
<div class="cb" style="left:626.5px;top:484.6px"></div>
<div class="ex" style="left:661.5px;top:480.1px"></div>
<svg class="a" style="left:661.5px;top:480.1px" width="23" height="23"><path d="M9.3 7.2L13.6 11.5L9.3 15.8" stroke="#fff" stroke-width="1.9" fill="none"/></svg>
<svg class="a" style="left:776px;top:477.58px" width="24" height="24" viewBox="0 0 24 24"><defs><linearGradient id="lc" x1="0" y1="0" x2="0" y2="1"><stop offset="0" stop-color="#f2d858"/><stop offset=".22" stop-color="#f0cc60"/><stop offset=".3" stop-color="#ebb373"/><stop offset="1" stop-color="#e8b070"/></linearGradient></defs><path d="M6.4 10V8.5A4.55 4.55 0 0 1 15.5 8.5V10" fill="none" stroke="#a8b2b4" stroke-width="2.3"/><rect x="3.5" y="9" width="15.1" height="12.1" rx="2" fill="url(#lc)"/><rect x="4" y="9.5" width="14.1" height="11.1" rx="1.6" fill="none" stroke="#f0b850" stroke-width="1" opacity=".6"/></svg>
<div class="dt" style="left:845.6px;top:486.1px">dias_festivos.jpg</div>
<div class="dt" style="left:958.2px;top:486.1px">CERT</div>
<div class="dt" style="left:1069.8px;top:487.1px">DOCUMENT</div>
<div class="dt" style="left:1181.4px;top:486.1px">image/png</div>
<div class="dt" style="left:1293.0px;top:486.1px">Library</div>
<div class="dt" style="left:1627.8px;top:486.1px">Jan/31/2025 3:5...</div>
<div class="cb" style="left:626.5px;top:520.1px"></div>
<div class="ex" style="left:661.5px;top:515.6px"></div>
<svg class="a" style="left:661.5px;top:515.6px" width="23" height="23"><path d="M9.3 7.2L13.6 11.5L9.3 15.8" stroke="#fff" stroke-width="1.9" fill="none"/></svg>
<svg class="a" style="left:776px;top:513.14px" width="24" height="24" viewBox="0 0 24 24"><defs><linearGradient id="lg" x1="0" y1="0" x2="0" y2="1"><stop offset="0" stop-color="#f2c400"/><stop offset=".22" stop-color="#f0b808"/><stop offset=".3" stop-color="#ee9a1a"/><stop offset="1" stop-color="#ea8c1e"/></linearGradient></defs><path d="M8.3 10.5V8.2C8.3 5.3 10.4 3.6 12.9 3.6C14.9 3.6 16.5 4.5 17.6 6.3" fill="none" stroke="#8c9ba0" stroke-width="2.3"/><rect x="5.6" y="8.2" width="15" height="12.5" rx="2" fill="url(#lg)"/><rect x="6.1" y="8.7" width="14" height="11.5" rx="1.6" fill="none" stroke="#f39c00" stroke-width="1" opacity=".6"/></svg>
<div class="dt" style="left:848.1px;top:523.6px">GetExportResul...</div>
<div class="dt" style="left:958.8px;top:523.1px">DOC</div>
<div class="dt" style="left:1069.8px;top:523.1px">DOCUMENT</div>
<div class="dt" style="left:1181.4px;top:521.6px">image/png</div>
<div class="dt" style="left:1293.0px;top:521.6px">Library</div>
<div class="dt" style="left:1627.8px;top:521.6px">Jan/31/2025 3:5...</div>
<div class="cb" style="left:626.5px;top:555.7px"></div>
<div class="ex" style="left:661.5px;top:551.2px"></div>
<svg class="a" style="left:661.5px;top:551.2px" width="23" height="23"><path d="M9.3 7.2L13.6 11.5L9.3 15.8" stroke="#fff" stroke-width="1.9" fill="none"/></svg>
<svg class="a" style="left:776px;top:548.70px" width="24" height="24" viewBox="0 0 24 24"><defs><linearGradient id="lc" x1="0" y1="0" x2="0" y2="1"><stop offset="0" stop-color="#f2d858"/><stop offset=".22" stop-color="#f0cc60"/><stop offset=".3" stop-color="#ebb373"/><stop offset="1" stop-color="#e8b070"/></linearGradient></defs><path d="M6.4 10V8.5A4.55 4.55 0 0 1 15.5 8.5V10" fill="none" stroke="#a8b2b4" stroke-width="2.3"/><rect x="3.5" y="9" width="15.1" height="12.1" rx="2" fill="url(#lc)"/><rect x="4" y="9.5" width="14.1" height="11.1" rx="1.6" fill="none" stroke="#f0b850" stroke-width="1" opacity=".6"/></svg>
<div class="dt" style="left:845.6px;top:557.2px">dias_festivos.jpg</div>
<div class="dt" style="left:958.2px;top:555.4px">CERT</div>
<div class="dt" style="left:1068.8px;top:558.2px">CERTIFICATE</div>
<div class="dt" style="left:1181.4px;top:557.2px">image/png</div>
<div class="dt" style="left:1293.0px;top:557.2px">Library</div>
<div class="dt" style="left:1627.8px;top:557.2px">Jan/31/2025 3:4...</div>
<div class="cb" style="left:626.5px;top:591.3px"></div>
<div class="ex" style="left:661.5px;top:586.8px"></div>
<svg class="a" style="left:661.5px;top:586.8px" width="23" height="23"><path d="M9.3 7.2L13.6 11.5L9.3 15.8" stroke="#fff" stroke-width="1.9" fill="none"/></svg>
<svg class="a" style="left:776px;top:584.26px" width="24" height="24" viewBox="0 0 24 24"><defs><linearGradient id="lc" x1="0" y1="0" x2="0" y2="1"><stop offset="0" stop-color="#f2d858"/><stop offset=".22" stop-color="#f0cc60"/><stop offset=".3" stop-color="#ebb373"/><stop offset="1" stop-color="#e8b070"/></linearGradient></defs><path d="M6.4 10V8.5A4.55 4.55 0 0 1 15.5 8.5V10" fill="none" stroke="#a8b2b4" stroke-width="2.3"/><rect x="3.5" y="9" width="15.1" height="12.1" rx="2" fill="url(#lc)"/><rect x="4" y="9.5" width="14.1" height="11.1" rx="1.6" fill="none" stroke="#f0b850" stroke-width="1" opacity=".6"/></svg>
<div class="dt" style="left:846.6px;top:592.8px">dias_festivos.jpg</div>
<div class="dt" style="left:958.2px;top:592.8px">CERT</div>
<div class="dt" style="left:1069.8px;top:593.3px">CERTIFICATE</div>
<div class="dt" style="left:1181.4px;top:592.8px">image/jpeg</div>
<div class="dt" style="left:1293.0px;top:592.8px">Library</div>
<div class="dt" style="left:1627.8px;top:592.8px">Nov/07/2024 12...</div>
<div class="cb" style="left:626.5px;top:626.8px"></div>
<div class="ex" style="left:661.5px;top:622.3px"></div>
<svg class="a" style="left:661.5px;top:622.3px" width="23" height="23"><path d="M9.3 7.2L13.6 11.5L9.3 15.8" stroke="#fff" stroke-width="1.9" fill="none"/></svg>
<svg class="a" style="left:776px;top:619.82px" width="24" height="24" viewBox="0 0 24 24"><defs><linearGradient id="lg" x1="0" y1="0" x2="0" y2="1"><stop offset="0" stop-color="#f2c400"/><stop offset=".22" stop-color="#f0b808"/><stop offset=".3" stop-color="#ee9a1a"/><stop offset="1" stop-color="#ea8c1e"/></linearGradient></defs><path d="M8.3 10.5V8.2C8.3 5.3 10.4 3.6 12.9 3.6C14.9 3.6 16.5 4.5 17.6 6.3" fill="none" stroke="#8c9ba0" stroke-width="2.3"/><rect x="5.6" y="8.2" width="15" height="12.5" rx="2" fill="url(#lg)"/><rect x="6.1" y="8.7" width="14" height="11.5" rx="1.6" fill="none" stroke="#f39c00" stroke-width="1" opacity=".6"/></svg>
<div class="dt" style="left:846.6px;top:628.3px">DiasFestivos20...</div>
<div class="dt" style="left:958.2px;top:628.3px">BOL</div>
<div class="dt" style="left:1069.8px;top:628.3px">BOL I1</div>
<div class="dt" style="left:1181.4px;top:628.3px">image/jpeg</div>
<div class="dt" style="left:1293.0px;top:628.3px">Library</div>
<div class="dt" style="left:1627.8px;top:628.3px">Oct/30/2024 4:1...</div>
<div class="dt" style="left:1739.4px;top:628.3px">Oct/01/2025</div>
<div class="a" style="left:1889px;top:225px;width:31px;height:440px;background:#fff"></div>
<div class="a" style="left:609px;top:655px;width:1280px;height:11px;background:#f9f9f9"></div>
<svg class="a" style="left:611px;top:656px" width="8" height="10"><path d="M6.5 1.5V8.5L1.5 5Z" fill="#9a9a9a"/></svg>
<svg class="a" style="left:1879px;top:656px" width="8" height="10"><path d="M1.5 1.5V8.5L6.5 5Z" fill="#9a9a9a"/></svg>
<div class="a" style="left:622px;top:657.5px;width:1191px;height:6.5px;background:#8a8a8a;border-radius:4px"></div>
<div class="a" style="left:611px;top:679.5px;width:26px;height:26px;border-radius:50%;background:#8a9786"></div>
<div class="t" style="left:611px;top:687px;width:26px;text-align:center;font-size:12px;color:#fff">10</div>
<div class="t" style="left:649.5px;top:687px;font-size:12px;color:#333">25</div>
<div class="t" style="left:680.5px;top:687px;font-size:12px;color:#333">50</div>
<div class="t" style="left:710.5px;top:687px;font-size:12px;color:#333">100</div>
<div class="a" style="left:1797px;top:679.5px;width:26px;height:26px;border-radius:50%;background:#8a9786"></div>
<div class="t" style="left:1797px;top:687px;width:26px;text-align:center;font-size:12px;color:#fff">1</div>
<div class="t" style="left:1838px;top:687px;font-size:12px;color:#333">2</div>
<svg class="a" style="left:1774px;top:686px" width="9" height="12"><path d="M6.5 1.5L2.5 6L6.5 10.5" stroke="#aaa" stroke-width="1.3" fill="none"/></svg>
<svg class="a" style="left:1868px;top:686px" width="9" height="12"><path d="M2.5 1.5L6.5 6L2.5 10.5" stroke="#222" stroke-width="1.6" fill="none"/></svg>
</body></html>
